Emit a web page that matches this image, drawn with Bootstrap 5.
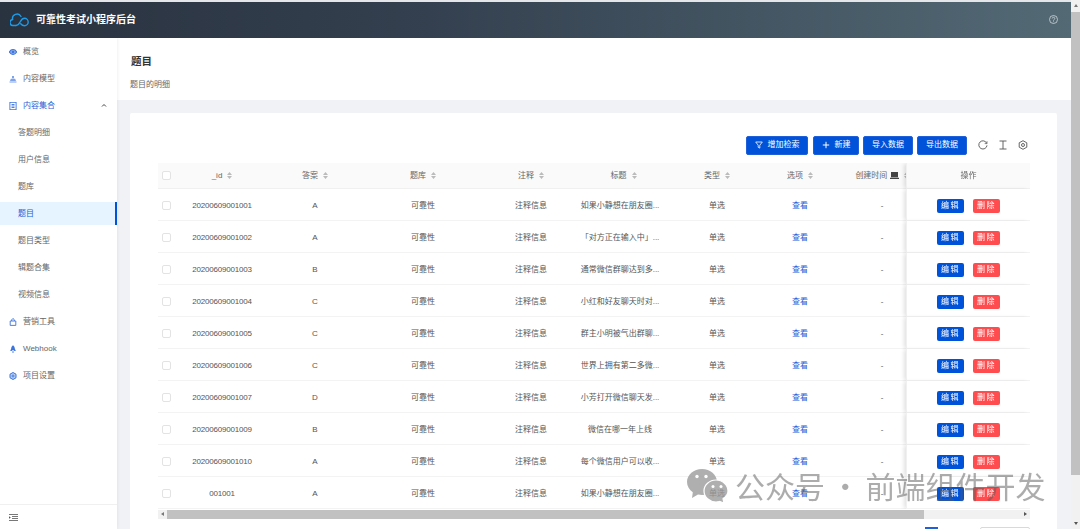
<!DOCTYPE html>
<html lang="zh">
<head>
<meta charset="utf-8">
<title>题目</title>
<link href="https://cdn.jsdelivr.net/npm/bootstrap@5.3.0/dist/css/bootstrap.min.css" rel="stylesheet">
<style>
html,body{height:529px;overflow:hidden}
body{font-family:"Liberation Sans","Noto Sans CJK SC",sans-serif;font-size:8px;line-height:12px;color:#555;background:#e4e6e9;padding-top:2px}
.shell{height:527px}
.appcol{width:1071px;background:#f0f2f5}
.winbar{width:9px;background:#f1f1f1;margin-top:-2px;padding-top:4px}
.winbar-up{width:0;margin:0 auto 5px;border-left:2.5px solid transparent;border-right:2.5px solid transparent;border-bottom:3px solid #777}
.winbar-down{width:0;margin:auto auto 4px;border-left:2.5px solid transparent;border-right:2.5px solid transparent;border-top:3px solid #555}
.winbar-thumb{height:463px;background:#c1c1c1}
.topbar{height:36px;background:linear-gradient(90deg,#29323f 0%,#34404f 40%,#536a75 100%);color:#fff;padding:0 13px 0 10px}
.topbar-title{font-size:10px;font-weight:700;margin-left:7px}
.sidebar{width:117px;background:#fff;box-shadow:1px 0 3px rgba(0,21,41,.06);z-index:2}
.side-item{height:27px;color:#666;padding-left:9px;padding-top:2px}
.side-item svg{width:8px;height:8px;margin-right:6px;flex:none}
.side-sub{padding-left:18px}
.side-open{color:#1f60d8;position:relative}
.side-chevron{position:absolute;left:101px;top:11px;margin:0!important;width:6px!important;height:5px!important}
.side-active{background:#e6f4ff;color:#1f60d8;border-right:2px solid #0052d9;height:23px;margin:2px 0}
.side-foot{height:25px;border-top:1px solid #f0f0f0;padding-left:9px}
.pagehead{height:62px;background:#fff;padding:15px 13px 0 14px}
.pagehead-title{font-size:10.5px;font-weight:700;color:#333;line-height:16px}
.pagehead-sub{margin-top:10px;color:#666;margin-left:-1px}
.panel{background:#fff;margin:13px 14px 0 13px;padding:23px 27px 0 28px;height:420px;border-radius:2px}
.toolbar{height:19px;margin-bottom:8px;width:872px;padding-right:2px}
.tool-btn{height:19px;background:#0052d9;border:1px solid #1f60d8;color:#fff;font-size:8px;line-height:12px;border-radius:2px;padding:0;margin-right:4px}
.tool-btn:hover{background:#0052d9;color:#fff}
.tool-w62{width:62px;margin-right:5px}.tool-w46{width:46px}.tool-w50{width:50px}
.tool-btn svg{width:8px;height:8px;margin-right:5px}
.tool-icon{width:10px;height:10px;color:#555;margin-left:10px}
.tool-first{margin-left:11px}
.tablewrap{overflow:hidden;width:872px}
.qtable{table-layout:fixed;width:901px;margin:0;border-collapse:separate;border-spacing:0;font-size:8px;--bs-table-color:#555}
.qtable th,.qtable td{padding:0;text-align:center;vertical-align:middle;white-space:nowrap;border-bottom:1px solid #f3f3f3;color:#555;font-weight:400;overflow:hidden}
.qtable thead th{height:26px;padding-top:1px;background:#fafafa;color:#666;border-bottom-color:#f0f0f0}
.qtable tbody td{height:32px;padding-top:3px}
.qtable .fixcol{position:sticky;right:0;background:#fff;box-shadow:-3px 0 4px -1px rgba(0,0,0,.12);border-left:1px solid #f0f0f0}
.qtable thead .fixcol{background:#fafafa}
.qtable .head-nudge{padding-left:7px}
.qtable .idcell{letter-spacing:-.2px}
.checkmark{display:block;width:9px;height:9px;border:1px solid #e3e3e3;border-radius:2px;background:#fff;margin-left:4px}
.sorter{display:inline-block;width:5px;height:7px;margin-left:5px;vertical-align:-1px;color:#bbb}
.see{color:#1f60d8;text-decoration:none}
.op-btn{display:inline-block;width:27px;height:14px;padding:0;line-height:13px;font-size:8px;color:#fff;border:0;border-radius:2px;letter-spacing:1.5px;margin:0 4.5px}
.op-edit{background:#0052d9}
.op-edit:hover{background:#0052d9;color:#fff}
.op-del{background:#ff4d4f}
.op-del:hover{background:#ff4d4f;color:#fff}
.hbar{height:9px;width:872px;background:#f1f1f1;margin-top:1px;padding:0 3px}
.hbar-thumb{width:757px;height:9px;background:#c1c1c1;margin:0 0 0 3px}
.arrow-l{border-top:2.5px solid transparent;border-bottom:2.5px solid transparent;border-right:3px solid #777}
.arrow-r{border-top:2.5px solid transparent;border-bottom:2.5px solid transparent;border-left:3px solid #555}
.pager{margin-top:8px;width:872px;padding-right:0}
.pager-cur{width:13px;height:12px;background:#1f60d8;margin-right:42px}
.pager-size{width:50px;height:12px;border:1px solid #d9d9d9;border-radius:2px}
.watermark{position:absolute;left:686px;top:467px;z-index:5;color:rgba(90,90,90,.5);font-size:30px;line-height:36px;word-spacing:-1.5px;font-family:"Noto Sans CJK SC",sans-serif;pointer-events:none;white-space:nowrap}
.watermark svg{width:43px;height:36px;margin-right:6px}
</style>
</head>
<body>
<svg width="0" height="0" class="position-absolute">
<symbol id="sort" viewBox="0 0 5 7"><path d="M2.5 0 5 3H0zM0 4h5L2.500 7z" fill="currentColor"/></symbol>
</svg>

<div class="shell d-flex">
  <div class="appcol d-flex flex-column">
    <header class="topbar d-flex align-items-center justify-content-between">
      <div class="d-flex align-items-center">
        <svg width="19" height="15" viewBox="0 0 19 15" fill="none" stroke="#1c9be8" stroke-width="1.400" stroke-linecap="round">
          <path d="M6 13.500H3.500A3 3 0 0 1 2.600 7.500 4.500 4.500 0 0 1 11 4.500"/>
          <path d="M6 13.500c2.500 0 3.500-2.500 4.500-4.200C11.500 7.500 13 6.300 14.500 6.300a3.700 3.700 0 0 1 0 7.400c-1.800 0-3-1-3.800-2"/>
        </svg>
        <span class="topbar-title">可靠性考试小程序后台</span>
      </div>
      <svg width="9" height="9" viewBox="0 0 9 9" fill="none" stroke="#cfd6da" stroke-width=".8"><circle cx="4.500" cy="4.500" r="4"/><path d="M3.200 3.500a1.300 1.300 0 1 1 1.900 1.200c-.4.200-.6.400-.6.900"/><path d="M4.500 6.400v.8"/></svg>
    </header>
    <div class="d-flex flex-grow-1 overflow-hidden">
      <nav class="sidebar d-flex flex-column flex-shrink-0">
        <div class="flex-grow-1">
          <div class="side-item d-flex align-items-center">
            <svg viewBox="0 0 8 8" fill="#8fb0ee" stroke="#3b74dc" stroke-width="1.100"><path d="M.3 4C1.300 2.300 2.600 1.500 4 1.500S6.700 2.300 7.700 4C6.700 5.700 5.400 6.500 4 6.500S1.300 5.700.3 4z"/><circle cx="4" cy="4" r=".8"/></svg>概览
          </div>
          <div class="side-item d-flex align-items-center">
            <svg viewBox="0 0 8 8" fill="#7ea3ea"><path d="M3 1h2v2.300H3zM1.800 3.800h4.400L7 6H1zM.5 6.500h7V7.500h-7z"/></svg>内容模型
          </div>
          <div class="side-item side-open d-flex align-items-center">
            <svg viewBox="0 0 8 8" fill="none" stroke="#3b74dc" stroke-width=".9"><rect x=".9" y=".3" width="6.200" height="7.400"/><path d="M2.500 2.500h3M2.500 4h3M2.500 5.500h3"/></svg>内容集合
            <svg class="side-chevron" viewBox="0 0 6 5" fill="none" stroke="#444" stroke-width="1"><path d="M1 3.500 3 1.500l2 2"/></svg>
          </div>
          <div class="side-item side-sub d-flex align-items-center">答题明细</div>
          <div class="side-item side-sub d-flex align-items-center">用户信息</div>
          <div class="side-item side-sub d-flex align-items-center">题库</div>
          <div class="side-item side-sub side-active d-flex align-items-center">题目</div>
          <div class="side-item side-sub d-flex align-items-center">题目类型</div>
          <div class="side-item side-sub d-flex align-items-center">辑题合集</div>
          <div class="side-item side-sub d-flex align-items-center">视频信息</div>
          <div class="side-item d-flex align-items-center">
            <svg viewBox="0 0 8 8" fill="none" stroke="#3b74dc" stroke-width=".9"><path d="M1.200 3h5.600v4.400H1.200zM2.600 3C2.600 1.500 3.200.7 4 .7S5.400 1.500 5.400 3"/></svg>营销工具
          </div>
          <div class="side-item d-flex align-items-center">
            <svg viewBox="0 0 8 8" fill="#3b74dc"><path d="M4 .2c1.200 1 1.800 2.100 1.800 3.300l1 2.500H5.500L4 5 2.500 6H1.200l1-2.500C2.200 2.300 2.800 1.200 4 .2z"/><circle cx="4" cy="7" r=".8"/></svg>Webhook
          </div>
          <div class="side-item d-flex align-items-center">
            <svg viewBox="0 0 8 8" fill="#b9cff5" stroke="#3b74dc" stroke-width="1"><path d="M4 .5 7 2.200v3.600L4 7.500 1 5.800V2.200z"/><circle cx="4" cy="4" r="1" fill="#fff"/></svg>项目设置
          </div>
        </div>
        <div class="side-foot d-flex align-items-center">
          <svg width="9" height="7" viewBox="0 0 9 7" stroke="#555" stroke-width=".8"><path d="M0 .5h9M3 2.500h6M3 4.500h6M0 6.500h9"/><path d="M0 2.200 1.800 3.500 0 4.800z" fill="#555" stroke="none"/></svg>
        </div>
      </nav>
      <main class="flex-grow-1 overflow-hidden">
        <div class="pagehead">
          <div class="pagehead-title">题目</div>
          <div class="pagehead-sub">题目的明细</div>
        </div>
        <div class="panel">
          <div class="toolbar d-flex justify-content-end align-items-center">
            <button class="btn tool-btn tool-w62 d-flex align-items-center justify-content-center"><svg viewBox="0 0 8 8" fill="none" stroke="#fff" stroke-width=".8"><path d="M.7 1h6.600L4.800 4.200v2.900L3.200 6.300V4.200z"/></svg>增加检索</button>
            <button class="btn tool-btn tool-w46 d-flex align-items-center justify-content-center"><svg viewBox="0 0 8 8" fill="none" stroke="#fff" stroke-width="1"><path d="M4 .8v6.400M.8 4h6.400"/></svg>新建</button>
            <button class="btn tool-btn tool-w50">导入数据</button>
            <button class="btn tool-btn tool-w50 me-0">导出数据</button>
            <svg class="tool-icon tool-first" viewBox="0 0 10 10" fill="none" stroke="currentColor" stroke-width=".9"><path d="M8.700 3.300A4.100 4.100 0 1 0 9 5.400"/><path d="M9 1.200v2.400H6.700" stroke-width=".7"/></svg>
            <svg class="tool-icon" viewBox="0 0 10 10" fill="none" stroke="currentColor" stroke-width=".9"><path d="M1.500 1h7M5 1v8M1.500 9h7"/></svg>
            <svg class="tool-icon" viewBox="0 0 10 10" fill="none" stroke="currentColor" stroke-width=".9"><path d="M5 .7 8.800 2.800v4.400L5 9.300 1.200 7.200V2.800z"/><circle cx="5" cy="5" r="1.500"/></svg>
          </div>
          <div class="tablewrap">
            <table class="table qtable">
              <colgroup><col style="width:17px"><col style="width:94px"><col style="width:92px"><col style="width:124px"><col style="width:92px"><col style="width:86px"><col style="width:108px"><col style="width:58px"><col style="width:106px"><col style="width:124px"></colgroup>
              <thead><tr>
                <th><span class="checkmark"></span></th>
                <th>_id<svg class="sorter"><use href="#sort"/></svg></th>
                <th>答案<svg class="sorter"><use href="#sort"/></svg></th>
                <th>题库<svg class="sorter"><use href="#sort"/></svg></th>
                <th>注释<svg class="sorter"><use href="#sort"/></svg></th>
                <th class="head-nudge">标题<svg class="sorter"><use href="#sort"/></svg></th>
                <th>类型<svg class="sorter"><use href="#sort"/></svg></th>
                <th>选项<svg class="sorter"><use href="#sort"/></svg></th>
                <th>创建时间 <svg width="9" height="7" viewBox="0 0 9 7" fill="#444" style="vertical-align:-1px"><path d="M1 0h7v5.200H1zM0 5.800h9V7H0z"/></svg><svg class="sorter"><use href="#sort"/></svg></th>
                <th class="fixcol">操作</th>
              </tr></thead>
              <tbody>
                <tr><td><span class="checkmark"></span></td><td class="idcell">20200609001001</td><td>A</td><td>可靠性</td><td>注释信息</td><td>如果小静想在朋友圈...</td><td>单选</td><td><a href="#" class="see">查看</a></td><td>-</td><td class="fixcol"><button class="btn op-btn op-edit">编辑</button><button class="btn op-btn op-del">删除</button></td></tr>
                <tr><td><span class="checkmark"></span></td><td class="idcell">20200609001002</td><td>A</td><td>可靠性</td><td>注释信息</td><td>「对方正在输入中」...</td><td>单选</td><td><a href="#" class="see">查看</a></td><td>-</td><td class="fixcol"><button class="btn op-btn op-edit">编辑</button><button class="btn op-btn op-del">删除</button></td></tr>
                <tr><td><span class="checkmark"></span></td><td class="idcell">20200609001003</td><td>B</td><td>可靠性</td><td>注释信息</td><td>通常微信群聊达到多...</td><td>单选</td><td><a href="#" class="see">查看</a></td><td>-</td><td class="fixcol"><button class="btn op-btn op-edit">编辑</button><button class="btn op-btn op-del">删除</button></td></tr>
                <tr><td><span class="checkmark"></span></td><td class="idcell">20200609001004</td><td>C</td><td>可靠性</td><td>注释信息</td><td>小红和好友聊天时对...</td><td>单选</td><td><a href="#" class="see">查看</a></td><td>-</td><td class="fixcol"><button class="btn op-btn op-edit">编辑</button><button class="btn op-btn op-del">删除</button></td></tr>
                <tr><td><span class="checkmark"></span></td><td class="idcell">20200609001005</td><td>C</td><td>可靠性</td><td>注释信息</td><td>群主小明被气出群聊...</td><td>单选</td><td><a href="#" class="see">查看</a></td><td>-</td><td class="fixcol"><button class="btn op-btn op-edit">编辑</button><button class="btn op-btn op-del">删除</button></td></tr>
                <tr><td><span class="checkmark"></span></td><td class="idcell">20200609001006</td><td>C</td><td>可靠性</td><td>注释信息</td><td>世界上拥有第二多微...</td><td>单选</td><td><a href="#" class="see">查看</a></td><td>-</td><td class="fixcol"><button class="btn op-btn op-edit">编辑</button><button class="btn op-btn op-del">删除</button></td></tr>
                <tr><td><span class="checkmark"></span></td><td class="idcell">20200609001007</td><td>D</td><td>可靠性</td><td>注释信息</td><td>小芳打开微信聊天发...</td><td>单选</td><td><a href="#" class="see">查看</a></td><td>-</td><td class="fixcol"><button class="btn op-btn op-edit">编辑</button><button class="btn op-btn op-del">删除</button></td></tr>
                <tr><td><span class="checkmark"></span></td><td class="idcell">20200609001009</td><td>B</td><td>可靠性</td><td>注释信息</td><td>微信在哪一年上线</td><td>单选</td><td><a href="#" class="see">查看</a></td><td>-</td><td class="fixcol"><button class="btn op-btn op-edit">编辑</button><button class="btn op-btn op-del">删除</button></td></tr>
                <tr><td><span class="checkmark"></span></td><td class="idcell">20200609001010</td><td>A</td><td>可靠性</td><td>注释信息</td><td>每个微信用户可以收...</td><td>单选</td><td><a href="#" class="see">查看</a></td><td>-</td><td class="fixcol"><button class="btn op-btn op-edit">编辑</button><button class="btn op-btn op-del">删除</button></td></tr>
                <tr><td><span class="checkmark"></span></td><td class="idcell">001001</td><td>A</td><td>可靠性</td><td>注释信息</td><td>如果小静想在朋友圈...</td><td>单选</td><td><a href="#" class="see">查看</a></td><td>-</td><td class="fixcol"><button class="btn op-btn op-edit">编辑</button><button class="btn op-btn op-del">删除</button></td></tr>
              </tbody>
            </table>
          </div>
          <div class="hbar d-flex align-items-center">
            <span class="arrow-l"></span>
            <div class="hbar-thumb"></div>
            <span class="arrow-r ms-auto"></span>
          </div>
          <div class="pager d-flex justify-content-end">
            <div class="pager-cur"></div>
            <div class="pager-size"></div>
          </div>
        </div>
      </main>
    </div>
  </div>
  <div class="winbar flex-shrink-0 d-flex flex-column"><div class="winbar-up"></div><div class="winbar-thumb"></div><div class="winbar-down"></div></div>
</div>

<div class="watermark d-flex align-items-center">
  <svg viewBox="0 0 43 36">
    <g opacity=".8">
      <path d="M16 2C7.700 2 1 7.800 1 15c0 4.200 2.300 7.900 5.800 10.300L6 31l6-3.500c1.300.3 2.600.5 4 .5 8.300 0 15-5.800 15-13S24.300 2 16 2z" fill="#9c9c9c"/>
      <path d="M30 13c-6.600 0-12 4.900-12 11s5.400 11 12 11c1.200 0 2.400-.2 3.500-.5L38 36l-1-4.300c3-2 5-4.600 5-7.700 0-6.100-5.400-11-12-11z" fill="#9c9c9c" stroke="#fff" stroke-width="1.200"/>
      <circle cx="11" cy="9.500" r="1.700" fill="#fff"/><circle cx="20" cy="9.500" r="1.700" fill="#fff"/>
      <circle cx="27" cy="19.500" r="1.500" fill="#fff"/><circle cx="35" cy="19.500" r="1.500" fill="#fff"/>
    </g>
  </svg>
  <span>公众号 · 前端组件开发</span>
</div>
<script src="https://cdn.jsdelivr.net/npm/bootstrap@5.3.0/dist/js/bootstrap.bundle.min.js"></script>
</body>
</html>
